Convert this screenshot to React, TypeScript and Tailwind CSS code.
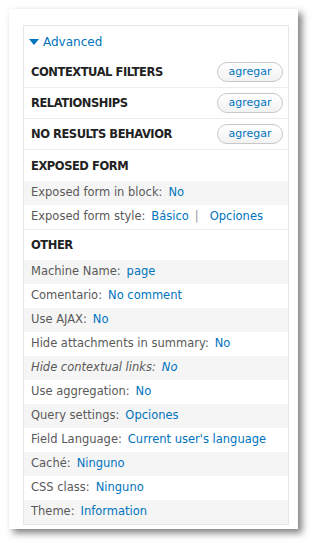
const font = { fontFamily: '"DejaVu Sans", Verdana, sans-serif' };

type Row = { label: string; value?: string; italic?: boolean };

const otherRows: Row[] = [
  { label: "Machine Name:", value: "page" },
  { label: "Comentario:", value: "No comment" },
  { label: "Use AJAX:", value: "No" },
  { label: "Hide attachments in summary:", value: "No" },
  { label: "Hide contextual links:", value: "No", italic: true },
  { label: "Use aggregation:", value: "No" },
  { label: "Query settings:", value: "Opciones" },
  { label: "Field Language:", value: "Current user's language" },
  { label: "Caché:", value: "Ninguno" },
  { label: "CSS class:", value: "Ninguno" },
  { label: "Theme:", value: "Information" },
];

function AddButton() {
  return (
    <button className="flex h-[20px] w-[66px] items-center justify-center rounded-full border border-[#c8c8c8] bg-gradient-to-b from-white to-[#f2f2f2] text-[11px] text-[#0074bd]">
      agregar
    </button>
  );
}

function Header({ title, button, border = true, h = "h-[31px]" }: { title: string; button?: boolean; border?: boolean; h?: string }) {
  return (
    <div
      className={`flex ${h} items-center justify-between pl-[7px] pr-[5px] ${border ? "border-b border-[#ececec]" : ""}`}
    >
      <span className="pt-[2px] text-[11.5px] font-bold tracking-[-0.45px] text-[#222]">{title}</span>
      {button && <AddButton />}
    </div>
  );
}

function SettingRow({ row, striped }: { row: Row; striped: boolean }) {
  return (
    <div
      className={`flex h-[24px] items-center pl-[7px] text-[11.5px] ${striped ? "bg-[#f5f5f5]" : "bg-white"} ${row.italic ? "italic" : ""}`}
    >
      <span className="text-[#595959]">{row.label}</span>
      <a className="ml-[6px] text-[#0074bd]">{row.value}</a>
    </div>
  );
}

export default function App() {
  return (
    <div className="min-h-screen bg-white pl-[9px] pt-[9px]" style={font}>
      <div className="h-[520px] w-[289px] bg-white pl-[14px] pr-[9px] pt-[16px] shadow-[4px_4px_7px_rgba(0,0,0,0.5)]">
        <div className="w-[266px] border border-[#e6e6e6] bg-white">
          {/* Advanced toggle */}
          <div className="flex h-[31px] items-center pl-[5px] text-[12px] text-[#0074bd]">
            <svg width="10" height="6" viewBox="0 0 10 6" className="mr-[4px]">
              <path d="M0 0 L10 0 L5 6 Z" fill="#0074bd" />
            </svg>
            Advanced
          </div>

          <Header title="CONTEXTUAL FILTERS" button />
          <Header title="RELATIONSHIPS" button />
          <Header title="NO RESULTS BEHAVIOR" button />

          <Header title="EXPOSED FORM" border={false} />
          <SettingRow row={{ label: "Exposed form in block:", value: "No" }} striped />
          <div className="flex h-[25px] items-center border-b border-[#ececec] pl-[7px] text-[11.5px]">
            <span className="text-[#595959]">Exposed form style:</span>
            <a className="ml-[6px] text-[#0074bd]">Básico</a>
            <span className="ml-[6px] text-[#999]">|</span>
            <a className="ml-[11px] text-[#0074bd]">Opciones</a>
          </div>

          <Header title="OTHER" border={false} h="h-[30px]" />
          {otherRows.map((row, i) => (
            <SettingRow key={row.label} row={row} striped={i % 2 === 0} />
          ))}
        </div>
      </div>
    </div>
  );
}
